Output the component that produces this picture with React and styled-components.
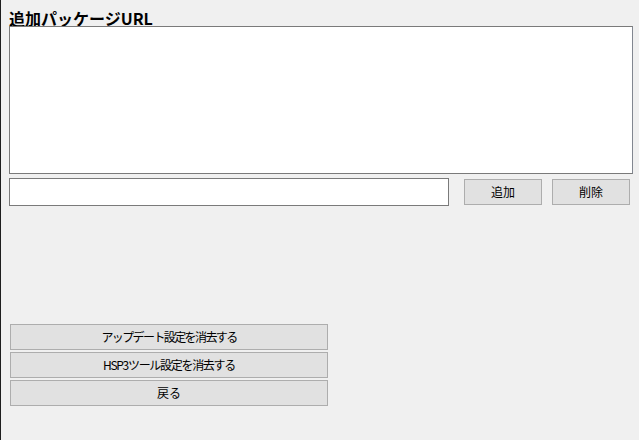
import React from "react";
import styled, { createGlobalStyle } from "styled-components";

const GlobalStyle = createGlobalStyle`
  html, body {
    margin: 0;
    padding: 0;
    background: #f0f0f0;
  }
  body {
    font-family: "Noto Sans CJK JP", "Noto Sans", sans-serif;
    color: #000;
  }
`;

const Window = styled.div`
  width: 639px;
  height: 440px;
  box-sizing: border-box;
  border-left: 1px solid #1e1e1e;
  padding: 10px 0 0 8px;
  display: flex;
  flex-direction: column;
  overflow: hidden;
`;

const Heading = styled.div`
  font-size: 16px;
  line-height: 16px;
  height: 16px;
  font-weight: 700;
  white-space: nowrap;
`;

const UrlList = styled.div`
  width: 624px;
  height: 148px;
  box-sizing: border-box;
  border: 1px solid #7a7a7a;
  border-right-color: #828790;
  background: #fff;
`;

const InputRow = styled.div`
  display: flex;
  align-items: flex-start;
  margin-top: 4px;
`;

const UrlInput = styled.input`
  width: 440px;
  height: 28px;
  box-sizing: border-box;
  border: 1px solid #7a7a7a;
  background: #fff;
  outline: none;
  padding: 0 4px;
  margin: 0;
`;

const Button = styled.button`
  box-sizing: border-box;
  width: ${(p) => p.$w}px;
  height: 26px;
  margin: 0;
  padding: 0;
  border: 1px solid #adadad;
  background: #e1e1e1;
  font-family: "Noto Sans CJK JP", "Noto Sans", sans-serif;
  font-size: 12px;
  letter-spacing: ${(p) => p.$ls || 0}px;
  color: #000;
  line-height: 24px;
`;

const RowButtons = styled.div`
  display: flex;
  gap: 10px;
  margin: 1px 0 0 15px;
`;

const ResetGroup = styled.div`
  display: flex;
  flex-direction: column;
  gap: 2px;
  margin: 118px 0 0 1px;
`;

export default function App() {
  return (
    <>
      <GlobalStyle />
      <Window>
        <Heading>追加パッケージURL</Heading>
        <UrlList />
        <InputRow>
          <UrlInput />
          <RowButtons>
            <Button $w={78}>追加</Button>
            <Button $w={78}>削除</Button>
          </RowButtons>
        </InputRow>
        <ResetGroup>
          <Button $w={318} $ls={-1.6}>アップデート設定を消去する</Button>
          <Button $w={318} $ls={-1.3}>HSP3ツール設定を消去する</Button>
          <Button $w={318}>戻る</Button>
        </ResetGroup>
      </Window>
    </>
  );
}
